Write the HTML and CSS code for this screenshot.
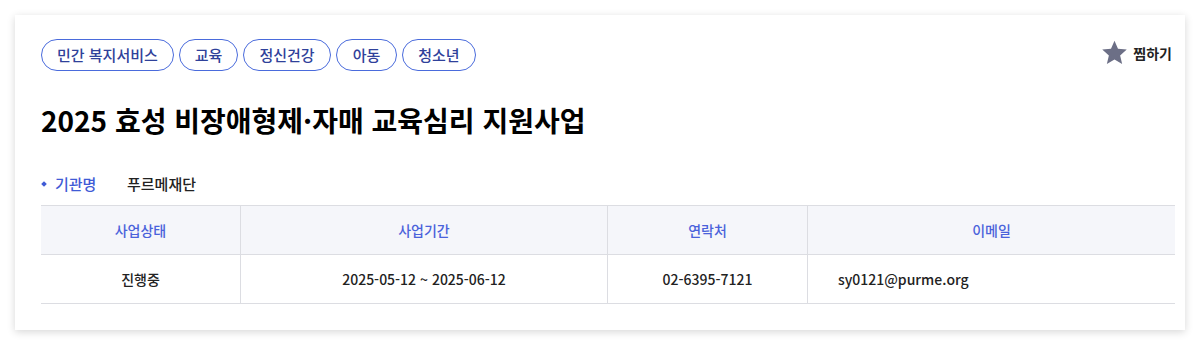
FILE: index.html
```html
<!DOCTYPE html>
<html lang="ko">
<head>
    <meta charset="UTF-8">
    <meta name="viewport" content="width=device-width, initial-scale=1.0">
    <title>2025 효성 비장애형제·자매 교육심리 지원사업</title>
    <link rel="stylesheet" href="styles.css">
</head>
<body>
    <div class="card">
        <div class="card-top">
            <ul class="tags">
                <li>민간 복지서비스</li>
                <li>교육</li>
                <li>정신건강</li>
                <li class="wide">아동</li>
                <li>청소년</li>
            </ul>
            <button class="wish">
                <svg width="27" height="27" viewBox="0 0 24 24"><path d="M12 1.5l3.1 7.2 7.8.7-5.9 5.2 1.8 7.7L12 18.2l-6.8 4.1 1.8-7.7L1.1 9.4l7.8-.7z" fill="#6c6f86"/></svg>
                <span>찜하기</span>
            </button>
        </div>

        <h1 class="title">2025 효성 비장애형제·자매 교육심리 지원사업</h1>

        <div class="org">
            <span class="org-label">기관명</span>
            <span class="org-name">푸르메재단</span>
        </div>

        <table class="info">
            <thead>
                <tr>
                    <th class="c1">사업상태</th>
                    <th class="c2">사업기간</th>
                    <th class="c3">연락처</th>
                    <th class="c4">이메일</th>
                </tr>
            </thead>
            <tbody>
                <tr>
                    <td>진행중</td>
                    <td>2025-05-12 ~ 2025-06-12</td>
                    <td>02-6395-7121</td>
                    <td class="email">sy0121@purme.org</td>
                </tr>
            </tbody>
        </table>
    </div>
</body>
</html>
```

FILE: styles.css
```css
body {
    margin: 0;
    padding: 15px;
    background: #fff;
    font-family: "Noto Sans CJK KR", "Noto Sans", sans-serif;
    color: #111;
}
.card {
    width: 1170px;
    box-sizing: border-box;
    padding: 24px 10px 26px 26px;
    background: #fff;
    box-shadow: 0 2px 8px rgba(0, 0, 0, 0.16);
}
.card-top {
    display: flex;
    justify-content: space-between;
    align-items: flex-start;
}
.tags {
    display: flex;
    gap: 5px;
    list-style: none;
    margin: 0;
    padding: 0;
}
.tags li {
    height: 32px;
    box-sizing: border-box;
    padding: 0 15px;
    border: 1px solid #4a6bdc;
    border-radius: 16px;
    font-size: 15px;
    line-height: 29px;
    font-weight: 500;
    color: #2f419a;
}
.tags li.wide {
    padding: 0 16px;
}
.wish {
    display: flex;
    align-items: center;
    gap: 5px;
    margin: 0 3px 0 0;
    padding: 0;
    border: none;
    background: none;
    font-family: inherit;
    font-size: 14px;
    font-weight: 700;
    color: #222;
    cursor: pointer;
}
.title {
    margin: 30px 0 0;
    font-size: 28px;
    line-height: 39px;
    font-weight: 700;
    color: #000;
}
.org {
    display: flex;
    align-items: center;
    margin-top: 34px;
    font-size: 15px;
    line-height: 20px;
}
.org-label {
    position: relative;
    padding-left: 14px;
    width: 72px;
    color: #3f5bd6;
    font-weight: 500;
}
.org-label::before {
    content: "";
    position: absolute;
    left: 1px;
    top: 8px;
    width: 4px;
    height: 4px;
    background: #3f5bd6;
    transform: rotate(45deg);
}
.org-name {
    font-weight: 500;
    color: #222;
}
.info {
    width: 1134px;
    margin-top: 11px;
    border-collapse: collapse;
    font-size: 14px;
}
.info th,
.info td {
    height: 48px;
    padding: 0;
    border-top: 1px solid #dcdde2;
    border-bottom: 1px solid #dcdde2;
    border-left: 1px solid #dcdde2;
    text-align: center;
}
.info th:first-child,
.info td:first-child {
    border-left: none;
}
.info th {
    background: #f5f6fa;
    color: #4a62db;
    font-weight: 500;
}
.info td {
    color: #222;
    font-weight: 500;
}
.info .c1 { width: 199px; }
.info .c2 { width: 366px; }
.info .c3 { width: 199px; }
.info td.email {
    text-align: left;
    padding-left: 30px;
}
```
